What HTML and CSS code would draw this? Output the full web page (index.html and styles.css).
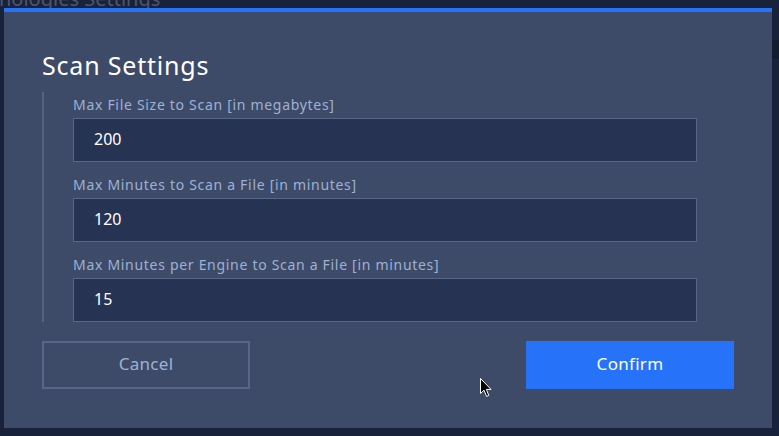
FILE: index.html
```html
<!DOCTYPE html>
<html lang="en">
<head>
<meta charset="utf-8">
<title>Scan Settings</title>
<link rel="stylesheet" href="styles.css">
</head>
<body>
<div class="backdrop">
  <div class="page-title">Technologies Settings</div>
  <div class="side-strip"></div>
</div>
<div class="overlay">
  <div class="modal">
    <h2 class="modal-title">Scan Settings</h2>
    <div class="fields">
      <div class="field">
        <label class="field-label">Max File Size to Scan [in megabytes]</label>
        <input class="field-input" type="text" value="200">
      </div>
      <div class="field">
        <label class="field-label">Max Minutes to Scan a File [in minutes]</label>
        <input class="field-input" type="text" value="120">
      </div>
      <div class="field">
        <label class="field-label">Max Minutes per Engine to Scan a File [in minutes]</label>
        <input class="field-input" type="text" value="15">
      </div>
    </div>
    <div class="actions">
      <button class="btn btn-cancel">Cancel</button>
      <button class="btn btn-confirm">Confirm</button>
    </div>
  </div>
</div>
<svg class="cursor" width="13" height="20" viewBox="0 0 13 20">
  <path d="M0.5 0.5 L0.5 15.5 L4 12.2 L6.6 18.4 L8.8 17.5 L6.3 11.4 L11 11.4 Z" fill="#000" stroke="#fff" stroke-width="1"/>
</svg>
</body>
</html>
```

FILE: styles.css
```css
* { box-sizing: border-box; }
html, body {
  margin: 0;
  padding: 0;
  width: 779px;
  height: 436px;
  overflow: hidden;
}
body {
  background: #19223b;
  font-family: "Noto Sans", "Open Sans", "Liberation Sans", sans-serif;
  position: relative;
}
.backdrop {
  position: absolute;
  inset: 0;
}
.page-title {
  position: absolute;
  left: -44px;
  top: -14px;
  font-size: 20px;
  line-height: 26px;
  color: #4e5668;
  white-space: nowrap;
}
.side-strip {
  position: absolute;
  right: 0;
  top: 40px;
  width: 7px;
  height: 19px;
  background: #141c32;
}
.overlay {
  position: absolute;
  inset: 0;
  display: flex;
  padding: 8px 7px 8px 4px;
}
.modal {
  flex: 1;
  background: #3d4b69;
  border-top: 4px solid #2673fa;
  padding: 0 38px;
  display: flex;
  flex-direction: column;
}
.modal-title {
  margin: 36px 0 0;
  font-size: 25px;
  line-height: 34px;
  letter-spacing: 0.8px;
  font-weight: 400;
  color: #ffffff;
}
.fields {
  margin-top: 10px;
  border-left: 2px solid #56637f;
  padding-left: 29px;
  padding-top: 6px;
  display: flex;
  flex-direction: column;
  gap: 16px;
  width: 655px;
}
.field {
  display: flex;
  flex-direction: column;
}
.field-label {
  font-size: 14px;
  line-height: 14px;
  height: 20px;
  letter-spacing: 0.7px;
  color: #9fb1d4;
}
.field-input {
  width: 624px;
  height: 44px;
  background: #263352;
  border: 1px solid #5a6686;
  color: #ffffff;
  font-family: inherit;
  font-size: 16px;
  padding: 0 20px 2px;
  outline: none;
}
.actions {
  margin-top: 19px;
  display: flex;
  justify-content: space-between;
}
.btn {
  width: 208px;
  height: 48px;
  font-family: inherit;
  font-size: 17px;
  letter-spacing: 0.3px;
  padding: 0 0 3px;
  cursor: pointer;
}
.btn-cancel {
  background: transparent;
  border: 2px solid #5a6686;
  color: #9fb1d4;
}
.btn-confirm {
  background: #2673fa;
  border: none;
  color: #ffffff;
}
.cursor {
  position: absolute;
  left: 480px;
  top: 378px;
}
```
